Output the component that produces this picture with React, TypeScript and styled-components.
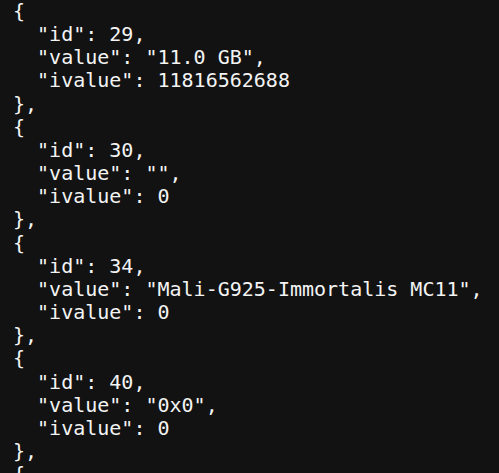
import React from "react";
import styled, { createGlobalStyle } from "styled-components";

const GlobalStyle = createGlobalStyle`
  html, body {
    margin: 0;
    padding: 0;
    background: #121212;
  }
  #root {
    min-height: 100vh;
    background: #121212;
  }
`;

const Viewer = styled.main`
  background: #121212;
  min-height: 100vh;
  overflow: hidden;
  padding: 0 0 0 13px;
`;

const Code = styled.pre`
  margin: 0;
  font-family: "DejaVu Sans Mono", "Liberation Mono", monospace;
  font-size: 20px;
  line-height: 23.16px;
  color: #f4f4f4;
  white-space: pre;
`;

type Entry = { id: number; value: string; ivalue: number };

const entries: Entry[] = [
  { id: 29, value: "11.0 GB", ivalue: 11816562688 },
  { id: 30, value: "", ivalue: 0 },
  { id: 34, value: "Mali-G925-Immortalis MC11", ivalue: 0 },
  { id: 40, value: "0x0", ivalue: 0 },
];

const formatEntry = (e: Entry) =>
  `{\n  "id": ${e.id},\n  "value": ${JSON.stringify(e.value)},\n  "ivalue": ${e.ivalue}\n},`;

export default function App() {
  const text = entries.map(formatEntry).join("\n") + "\n{";
  return (
    <>
      <GlobalStyle />
      <Viewer>
        <Code>{text}</Code>
      </Viewer>
    </>
  );
}
